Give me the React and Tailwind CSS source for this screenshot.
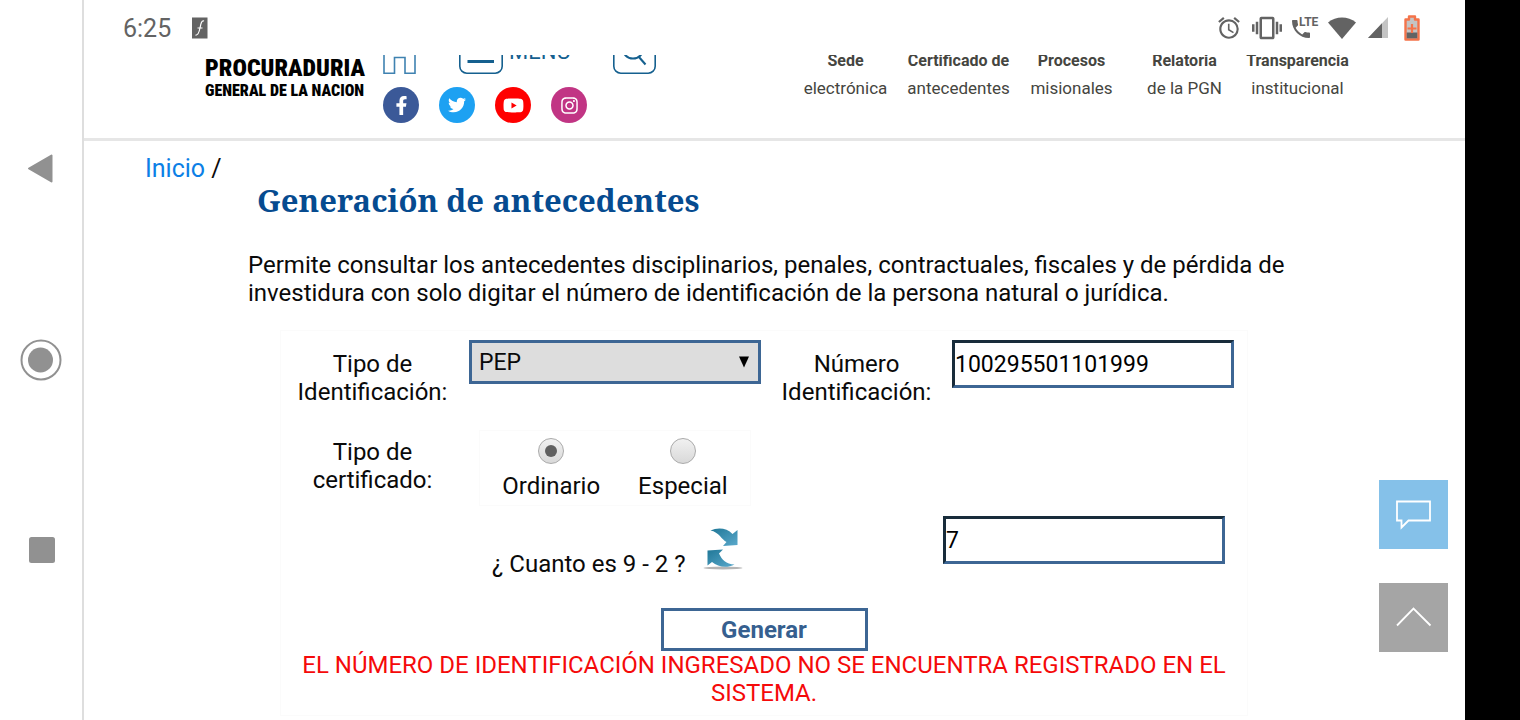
import { useState } from "react";
import { FaFacebookF, FaTwitter, FaYoutube, FaInstagram } from "react-icons/fa";
import { MdAccessAlarm, MdVibration, MdPhone } from "react-icons/md";

const socials = [
  { name: "Facebook", Icon: FaFacebookF, color: "bg-[#3b5998]", size: 19 },
  { name: "Twitter", Icon: FaTwitter, color: "bg-[#1da1f2]", size: 18 },
  { name: "YouTube", Icon: FaYoutube, color: "bg-[#ff0000]", size: 21 },
  { name: "Instagram", Icon: FaInstagram, color: "bg-[#c13584]", size: 19 },
];

const quickLinks = [
  ["Sede", "electrónica"],
  ["Certificado de", "antecedentes"],
  ["Procesos", "misionales"],
  ["Relatoria", "de la PGN"],
  ["Transparencia", "institucional"],
];

function SystemNav() {
  return (
    <nav
      aria-label="Sistema"
      className="flex w-[84px] shrink-0 flex-col items-center justify-between border-r-2 border-[#dedede] pt-[148px] pb-[149px]"
    >
      <button type="button" aria-label="Atrás">
        <svg width="42" height="42" viewBox="0 0 42 42">
          <path d="M9 20.5 31.5 7.5V33.5Z" fill="#919191" stroke="#919191" strokeWidth="2" strokeLinejoin="round" />
        </svg>
      </button>
      <button type="button" aria-label="Inicio del dispositivo">
        <svg width="42" height="42" viewBox="0 0 42 42">
          <circle cx="21" cy="21" r="19.5" fill="none" stroke="#919191" strokeWidth="2" />
          <circle cx="20.5" cy="21" r="12.5" fill="#919191" />
        </svg>
      </button>
      <button type="button" aria-label="Recientes">
        <svg width="42" height="42" viewBox="0 0 42 42">
          <rect x="9" y="8" width="26" height="26" rx="2.5" fill="#919191" />
        </svg>
      </button>
    </nav>
  );
}

function StatusBar() {
  return (
    <div className="flex h-[55px] items-center pr-[45px] pl-[39px] text-[#636363]">
      <span className="pt-0.5 text-[25px]">6:25</span>
      <svg className="ml-[21px]" width="16" height="22" viewBox="0 0 16 22">
        <rect width="15.5" height="21" y="0.5" fill="#636363" />
        <path d="M12 4C9.500 3 8.800 7 8 11S6 18.500 3.500 18M5.500 11H10.500" fill="none" stroke="#fff" strokeWidth="1.200" />
      </svg>
      <div className="ml-auto flex items-center gap-[10px]">
        <MdAccessAlarm size={26} />
        <MdVibration size={30} />
        <span className="relative flex w-7">
          <MdPhone size={26} className="-ml-1 pt-0.5" />
          <span className="absolute top-0.5 left-[7px] bg-white text-[12px] leading-[10px] font-bold">LTE</span>
        </span>
        <svg className="-ml-0.5" width="28" height="22" viewBox="0 0 28 22">
          <path d="M0 5.500C8-1.200 20-1.200 28 5.500L14 22Z" fill="#636363" />
        </svg>
        <svg className="ml-0.5" width="20" height="21" viewBox="0 0 20 21">
          <path d="M20 0V21H0Z" fill="#c4c4c4" />
          <path d="M14 6.300V21H0Z" fill="#636363" />
        </svg>
        <svg className="ml-1.5" width="16" height="26" viewBox="0 0 16 26">
          <path d="M5 1.500H11V4.500H14.500V24.500H1.500V4.500H5Z" fill="#c4c4c4" stroke="#f4734a" strokeWidth="2.400" strokeLinejoin="round" />
          <path d="M2.700 17.500H13.300V23.300H2.700Z" fill="#636363" />
          <path d="M8 9V18M3.500 13.500H12.500" stroke="#f4734a" strokeWidth="2.200" />
        </svg>
      </div>
    </div>
  );
}

function Header() {
  return (
    <header className="overflow-hidden border-b-[3px] border-[#e6e6e6]">
      <div className="-mt-[25px] flex pr-[111px] pb-[15px] pl-[121px]">
        <a href="#" className="w-[160px] pt-[26px] font-['Roboto_Condensed',Roboto,sans-serif] font-black text-black">
          <span className="block text-[24px] leading-6 whitespace-nowrap">PROCURADURIA</span>
          <span className="block text-[16px] leading-[22px] whitespace-nowrap">GENERAL DE LA NACION</span>
        </a>
        <div className="ml-[18px] text-[#15608f]">
          <div className="flex h-11">
            <a href="#" aria-label="Inicio">
              <svg width="33" height="44" viewBox="0 0 33 44" fill="none" stroke="#3f82b1" strokeWidth="1.600">
                <path d="M1 20V43.200H11.500V27.500H22V43.200H32V20L16.500 6Z" />
              </svg>
            </a>
            <button type="button" className="ml-[43px] flex items-center gap-[6px] text-[22px] leading-none">
              <svg width="44" height="44" viewBox="0 0 44 44" fill="none" stroke="#15608f">
                <rect x="0.800" y="0.800" width="42.400" height="42.400" rx="7" strokeWidth="1.600" />
                <path d="M8.500 13H35M8.500 22H35M8.500 31.500H35" strokeWidth="3" />
              </svg>
              <span>MENÚ</span>
            </button>
            <button type="button" aria-label="Buscar" className="ml-[42px]">
              <svg width="43" height="44" viewBox="0 0 43 44" fill="none" stroke="#15608f">
                <rect x="0.800" y="0.800" width="41.400" height="42.400" rx="7" strokeWidth="1.600" />
                <circle cx="20" cy="18" r="10.500" strokeWidth="2" />
                <path d="M25.500 26.500 32.500 34.500" strokeWidth="2" />
              </svg>
            </button>
          </div>
          <div className="mt-[13px] flex gap-5">
            {socials.map(({ name, Icon, color, size }) => (
              <a key={name} href="#" aria-label={name} className={`flex size-9 items-center justify-center rounded-full text-white ${color}`}>
                <Icon size={size} />
              </a>
            ))}
          </div>
        </div>
        <nav aria-label="Accesos" className="ml-auto grid grid-cols-[repeat(5,113px)] pt-[17px] text-center text-[#454540]">
          {quickLinks.map(([top, bottom]) => (
            <a key={top} href="#" className="whitespace-nowrap">
              <span className="block text-base leading-7 font-bold">{top}</span>
              <span className="block text-[17px] leading-[26px]">{bottom}</span>
            </a>
          ))}
        </nav>
      </div>
    </header>
  );
}

function RefreshIcon() {
  return (
    <svg width="40" height="42" viewBox="0 0 40 42">
      <defs>
        <linearGradient id="arrow" x1="0" y1="0" x2="1" y2="1">
          <stop offset="0" stopColor="#1f7797" />
          <stop offset="1" stopColor="#5ba9cc" />
        </linearGradient>
      </defs>
      <ellipse cx="20" cy="40" rx="19.500" ry="1.500" fill="#b5b5b5" />
      <path d="M7.500 2.500C15-1 24 0 29.500 6L34.500 2V17L20 18L23.500 14C19 12 16 4 7.500 2.500Z" fill="url(#arrow)" />
      <path d="M4.500 22.500 20 21.500 16 25.500C19 32 23 36 31.500 36.500C24 40.500 15 39 9 34L4.500 37.500Z" fill="url(#arrow)" />
    </svg>
  );
}

const inputStyle =
  "h-12 w-[282px] border-3 border-t-[#182c3b] border-l-[#182c3b] border-r-[#3d6694] border-b-[#3d6694] bg-white text-[23px] text-black outline-none";

const radioStyle =
  "flex size-[26px] appearance-none items-center justify-center rounded-full border border-[#aaa] bg-linear-to-b from-[#f1f1f1] to-[#d9d9d9] before:size-3 before:rounded-full checked:before:bg-[#606060]";

function CertificateForm() {
  const [docType, setDocType] = useState("PEP");
  const [number, setNumber] = useState("100295501101999");
  const [kind, setKind] = useState("Ordinario");
  const [answer, setAnswer] = useState("7");

  return (
    <form className="mt-[23px] ml-8 max-w-[968px] border border-[#fbfbfb] pt-[9px] pb-2" onSubmit={(e) => e.preventDefault()}>
      <div className="grid grid-cols-[183px_297px_191px_1fr] items-start">
        <label htmlFor="docType" className="px-4 pt-[10px] text-center">
          Tipo de Identificación:
        </label>
        <div className="relative ml-[5px]">
          <select
            id="docType"
            value={docType}
            onChange={(e) => setDocType(e.target.value)}
            className="h-11 w-full appearance-none border-3 border-[#3d6694] bg-[#dddddd] pt-0.5 pl-[7px] text-[23px] outline-none"
          >
            <option>PEP</option>
            <option>Cédula de ciudadanía</option>
            <option>Cédula de extranjería</option>
          </select>
          <svg className="pointer-events-none absolute top-4 right-3" width="10" height="12" viewBox="0 0 10 12">
            <path d="M0 0.500H10L5 11.500Z" fill="#000" />
          </svg>
        </div>
        <label htmlFor="number" className="px-4 pt-[10px] text-center">
          Número Identificación:
        </label>
        <input id="number" type="text" value={number} onChange={(e) => setNumber(e.target.value)} className={inputStyle} />
      </div>

      <fieldset className="mt-6 grid grid-cols-[183px_1fr] items-start">
        <div className="px-4 pt-2 text-center" id="kindLabel">
          Tipo de certificado:
        </div>
        <div role="radiogroup" aria-labelledby="kindLabel" className="ml-[15px] flex w-[272px] justify-center gap-[38px] border border-[#fbfbfb] pt-[7px] pb-[5px]">
          {["Ordinario", "Especial"].map((option) => (
            <label key={option} className="flex flex-col items-center gap-2">
              <input type="radio" name="kind" value={option} checked={kind === option} onChange={() => setKind(option)} className={radioStyle} />
              {option}
            </label>
          ))}
        </div>
      </fieldset>

      <div className="mt-[10px] flex items-start justify-between pr-[22px] pl-[211px]">
        <div className="flex items-start gap-[17px] pt-3">
          <label htmlFor="answer" className="pt-[22px]">
            ¿ Cuanto es 9 - 2 ?
          </label>
          <button type="button" aria-label="Cambiar pregunta">
            <RefreshIcon />
          </button>
        </div>
        <input id="answer" type="text" value={answer} onChange={(e) => setAnswer(e.target.value)} className={inputStyle} />
      </div>

      <div className="mt-[30px] flex flex-col items-center">
        <button type="submit" className="h-[43px] w-[207px] border-3 border-[#3d6694] bg-white text-[24px] font-bold text-[#365f8f]">
          Generar
        </button>
        <p role="alert" className="px-4 text-center text-[#f50a0a]">
          EL NÚMERO DE IDENTIFICACIÓN INGRESADO NO SE ENCUENTRA REGISTRADO EN EL SISTEMA.
        </p>
      </div>
    </form>
  );
}

export default function App() {
  return (
    <div className="flex min-h-screen bg-white font-[Roboto,sans-serif] text-[24px] leading-7 text-[#0a0a0a]">
      <SystemNav />
      <div className="relative min-w-0 flex-1">
        <StatusBar />
        <Header />
        <main className="px-[61px] pt-[14px]">
          <nav aria-label="Ruta" className="text-[25px]">
            <a href="#" className="text-[#0c7fe6]">Inicio</a> /
          </nav>
          <div className="px-[103px]">
            <h1 className="ml-[9px] font-['Noto_Serif','DejaVu_Serif',serif] text-[31px] leading-[34px] font-bold text-[#064b90]">
              Generación de antecedentes
            </h1>
            <p className="mt-[34px]">
              Permite consultar los antecedentes disciplinarios, penales, contractuales, fiscales y de pérdida de investidura con solo
              digitar el número de identificación de la persona natural o jurídica.
            </p>
            <CertificateForm />
          </div>
        </main>
        <div className="absolute top-[480px] right-[17px] flex flex-col gap-[34px]">
          <button type="button" aria-label="Chat" className="flex size-[69px] items-center justify-center bg-[#85c1e9]">
            <svg width="36" height="30" viewBox="0 0 36 30" fill="none" stroke="#fff" strokeWidth="1.800">
              <path d="M1 1.500H34V20.500H12.500L5.500 27.500V20.500H1Z" />
            </svg>
          </button>
          <button type="button" aria-label="Subir" className="flex size-[69px] items-center justify-center bg-[#a5a5a5]">
            <svg width="36" height="22" viewBox="0 0 36 22" fill="none" stroke="#fff" strokeWidth="1.800">
              <path d="M1 18.500 17.500 1.500 34.500 18.500" />
            </svg>
          </button>
        </div>
      </div>
      <div className="w-[55px] shrink-0 bg-black" />
    </div>
  );
}
